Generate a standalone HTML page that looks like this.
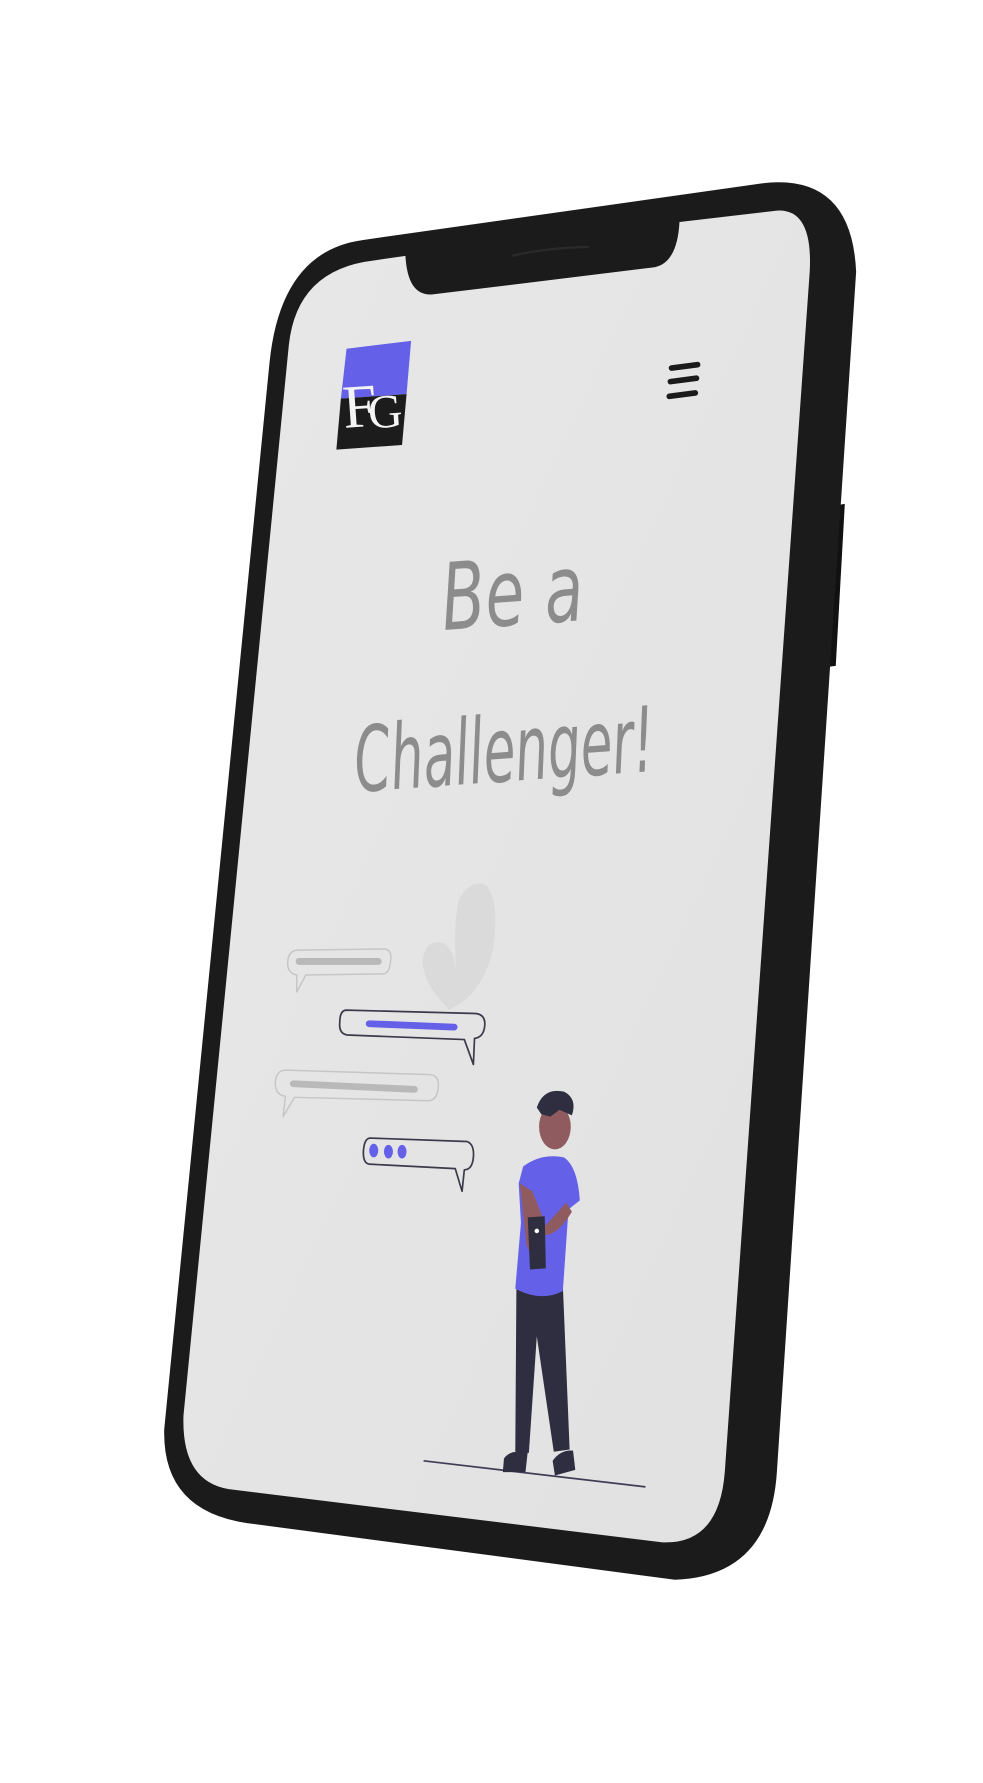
<!DOCTYPE html>
<html><head><meta charset="utf-8"><style>
html,body{margin:0;padding:0;background:#fff;width:983px;height:1783px;overflow:hidden}
svg{display:block}
</style></head><body>
<svg width="983" height="1783" viewBox="0 0 868 1574.5" xmlns="http://www.w3.org/2000/svg">
<defs>
<linearGradient id="scr" x1="0" y1="0" x2="1" y2="1">
<stop offset="0" stop-color="#e8e8e8"/><stop offset="1" stop-color="#e1e1e1"/>
</linearGradient>
</defs>
<path d="M728 448 L746 445 L738 588 L722 590 Z" fill="#111"/>
<path d="M320 212 L672 162 Q752 152 756 240 L686 1300 Q680 1392 596 1395 L218 1345 Q143 1334 145 1262 L238 320 Q248 222 320 212 Z" fill="#1b1b1b"/>
<path d="M358 226 Q360 262 382 260 L578 236 Q598 232 600 196 L686 186 Q718 184 715 240 L640 1300 Q635 1364 585 1362 L202 1315 Q160 1308 162 1250 L255 305 Q262 238 330 230 Z" fill="url(#scr)"/>
<path d="M452 226 Q480 219 520 218" stroke="#2a2a2a" stroke-width="2" fill="none"/>
<g>
<path d="M306 308 L363 301 L359 348 L301 352 Z" fill="#6560e8"/>
<path d="M301 352 L359 348 L355 393 L297 397 Z" fill="#1c1c1c"/>
<text x="302" y="376" font-family="Liberation Serif,serif" font-size="54" fill="#f4f4f4" transform="rotate(-4 330 350)">F</text>
<text x="324" y="378" font-family="Liberation Serif,serif" font-size="42" fill="#f4f4f4" transform="rotate(-4 330 350)">G</text>
</g>
<g stroke="#1a1a1a" stroke-width="5" stroke-linecap="round">
<line x1="593" y1="325" x2="616" y2="322"/>
<line x1="592" y1="337" x2="615" y2="334"/>
<line x1="591" y1="350" x2="614" y2="347"/>
</g>
<g font-family="DejaVu Sans, Liberation Sans, sans-serif" font-style="italic" fill="#8c8c8c" font-weight="200">
<text x="452" y="552" font-size="82" text-anchor="middle" textLength="125" lengthAdjust="spacingAndGlyphs" transform="rotate(-4 452 520)">Be  a</text>
<text x="445" y="690" font-size="80" text-anchor="middle" textLength="265" lengthAdjust="spacingAndGlyphs" transform="rotate(-4 445 660)">Challenger!</text>
</g>
<path d="M395 890 Q375 870 373 850 Q375 828 392 833 Q402 840 403 860 Q400 820 405 795 Q415 775 430 782 Q442 800 435 840 Q425 880 395 892 Z" fill="#dadada"/>
<g fill="none" stroke-linejoin="round">
<path d="M262 839 L340 838 Q346 839 345 848 Q344 860 338 860 L270 861 L262 876 L262 861 Q254 859 254 851 Q254 840 262 839 Z" stroke="#c6c6c6" stroke-width="1.3"/>
<path d="M306 892 L420 895 Q429 896 428 906 Q427 916 419 917 L418 940 L410 918 L307 914 Q299 913 300 903 Q300 892 306 892 Z" stroke="#3a3a4a" stroke-width="1.5"/>
<path d="M252 945 L380 949 Q388 950 387 960 Q386 972 378 972 L260 969 L250 986 L252 968 Q243 967 243 956 Q244 945 252 945 Z" stroke="#c6c6c6" stroke-width="1.3"/>
<path d="M327 1005 L412 1008 Q419 1010 418 1022 Q417 1033 410 1033 L408 1052 L402 1032 L326 1028 Q320 1027 321 1015 Q322 1005 327 1005 Z" stroke="#3a3a4a" stroke-width="1.5"/>
</g>
<g stroke-linecap="round">
<line x1="264" y1="849" x2="334" y2="849" stroke="#b9b9b9" stroke-width="6"/>
<line x1="326" y1="904" x2="401" y2="907" stroke="#6560e8" stroke-width="6"/>
<line x1="259" y1="957" x2="366" y2="962" stroke="#b9b9b9" stroke-width="6"/>
</g>
<g fill="#6560e8"><ellipse cx="330" cy="1016" rx="4" ry="6"/><ellipse cx="343" cy="1017" rx="4" ry="6"/><ellipse cx="355" cy="1017" rx="4" ry="6"/></g>
<line x1="374" y1="1290" x2="570" y2="1313" stroke="#3f3d56" stroke-width="1.5"/>
<g>
<path d="M456 1135 L455 1282 L467 1283 L474 1180 L489 1282 L503 1280 L497 1135 Z" fill="#2f2e41"/>
<path d="M445 1288 Q450 1280 466 1282 L464 1300 L444 1300 Z" fill="#2f2e41"/>
<path d="M488 1290 Q495 1280 506 1281 L508 1298 L490 1303 Z" fill="#2f2e41"/>
<ellipse cx="490" cy="995" rx="14" ry="20" fill="#8f5b5f"/>
<path d="M474 978 Q480 960 498 964 Q510 970 505 985 L494 980 L486 986 L478 984 Z" fill="#2f2e41"/>
<path d="M462 1030 Q478 1018 498 1022 Q510 1030 512 1060 L502 1068 L497 1140 Q478 1150 455 1138 L460 1080 L458 1045 Z" fill="#6560e8"/>
<path d="M459 1045 L465 1100 L470 1110 L478 1105 L475 1090 Q490 1095 505 1070 L500 1062 L482 1082 L470 1052 Z" fill="#8f5b5f"/>
<path d="M466 1075 L481 1074 L482 1120 L468 1121 Z" fill="#2f2e41"/>
<circle cx="474" cy="1087" r="2" fill="#fff"/>
</g>
</svg>
</body></html>
